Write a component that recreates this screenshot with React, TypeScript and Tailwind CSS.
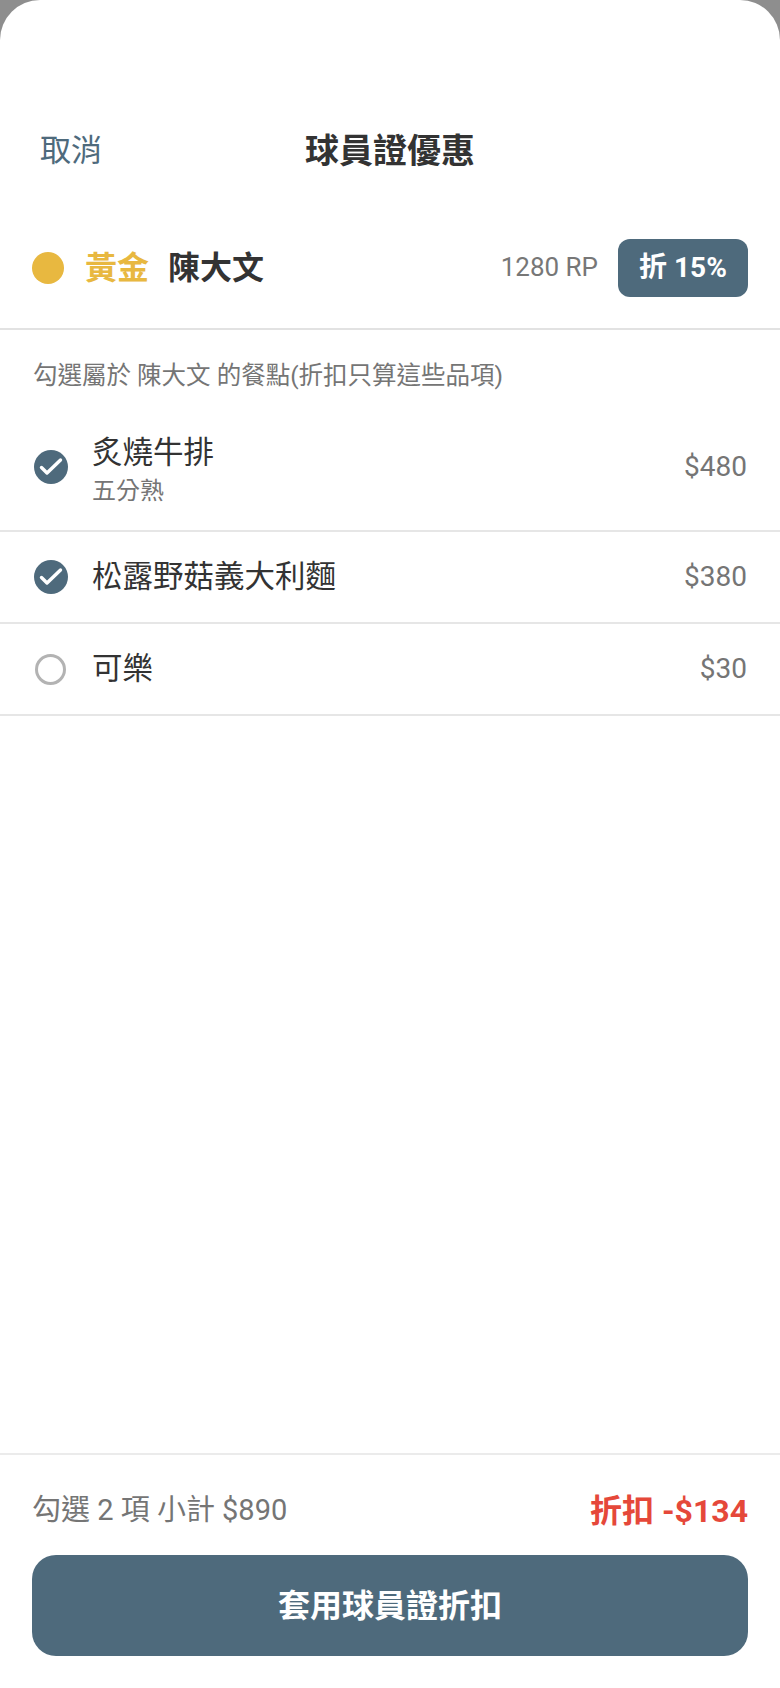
import { useState } from "react"

type Item = {
  id: number
  name: string
  note?: string
  price: number
}

const items: Item[] = [
  { id: 1, name: "炙燒牛排", note: "五分熟", price: 480 },
  { id: 2, name: "松露野菇義大利麵", price: 380 },
  { id: 3, name: "可樂", price: 30 },
]

const font = { fontFamily: 'Roboto, "Noto Sans CJK TC", sans-serif' }

function CheckMark({ checked }: { checked: boolean }) {
  if (!checked) {
    return <div className="w-[31px] h-[31px] rounded-full border-[3px] border-[#b3b3b3] shrink-0 ml-[2px] mr-[2px]" />
  }
  return (
    <div className="w-[34px] h-[34px] rounded-full bg-[#4e6a7c] shrink-0 ml-[1px]">
      <svg width="34" height="34" viewBox="0 0 34 34" fill="none">
        <path d="M7.5 17.5L13 23L26.5 10" stroke="white" strokeWidth="3.4" strokeLinecap="round" strokeLinejoin="round" />
      </svg>
    </div>
  )
}

export default function App() {
  const [ checked, setChecked ] = useState<number[]>([1, 2])

  const toggle = (id: number) => {
    setChecked(prev => prev.includes(id) ? prev.filter(x => x !== id) : [...prev, id])
  }

  return (
    <div className="w-[780px] h-[1688px] bg-[#8e8e8e]" style={font}>
      <div className="w-full h-full bg-white rounded-t-[40px] flex flex-col">
        {/* header */}
        <div className="relative h-[200px] pt-[130px] flex items-start justify-center">
          <button className="absolute left-[40px] top-[130px] text-[31px] leading-[42px] text-[#4e6a7c]">取消</button>
          <div className="text-[34px] leading-[42px] font-bold text-[#333333]">球員證優惠</div>
        </div>

        {/* member */}
        <div className="h-[130px] pt-[7px] flex items-center px-[32px] border-b-2 border-[#e2e2e2]">
          <div className="w-[32px] h-[32px] rounded-full bg-[#e8b840]" />
          <span className="ml-[21px] text-[32px] font-bold text-[#e8b840]">黃金</span>
          <span className="ml-[19px] text-[32px] font-bold text-[#333333]">陳大文</span>
          <span className="ml-auto text-[26px] text-[#777777]">1280 RP</span>
          <div className="ml-[20px] w-[130px] h-[58px] rounded-[12px] bg-[#4e6a7c] flex items-center justify-center text-white text-[28px] font-bold">
            折 15%
          </div>
        </div>

        {/* hint */}
        <div className="px-[33px] pt-[31px] pb-[13px] text-[24.5px] leading-[30px] text-[#757575]">
          勾選屬於 陳大文 的餐點(折扣只算這些品項)
        </div>

        {/* items */}
        {items.map(item => (
          <div
            key={item.id}
            onClick={() => toggle(item.id)}
            className={`flex items-center px-[33px] border-b-2 border-[#e6e6e6] ${item.note ? "h-[128px]" : "h-[92px]"}`}
          >
            <CheckMark checked={checked.includes(item.id)} />
            <div className={`ml-[24px] flex flex-col ${item.note ? "pt-[8px]" : ""}`}>
              <span className="text-[30.5px] leading-[40px] text-[#333333]">{item.name}</span>
              {item.note && <span className="text-[24px] leading-[36px] text-[#757575]">{item.note}</span>}
            </div>
            <span className="ml-auto text-[28px] text-[#757575]">${item.price}</span>
          </div>
        ))}

        <div className="flex-1" />

        {/* footer */}
        <div className="border-t-2 border-[#ebebeb] px-[32px] pb-[32px]">
          <div className="h-[100px] pt-[12px] flex items-center justify-between">
            <span className="text-[29px] text-[#757575]">勾選 2 項 小計 $890</span>
            <span className="text-[32px] font-bold text-[#e5483a]">折扣 -$134</span>
          </div>
          <button className="w-full h-[101px] rounded-[24px] bg-[#4e6a7c] text-white text-[32px] font-bold">
            套用球員證折扣
          </button>
        </div>
      </div>
    </div>
  )
}
